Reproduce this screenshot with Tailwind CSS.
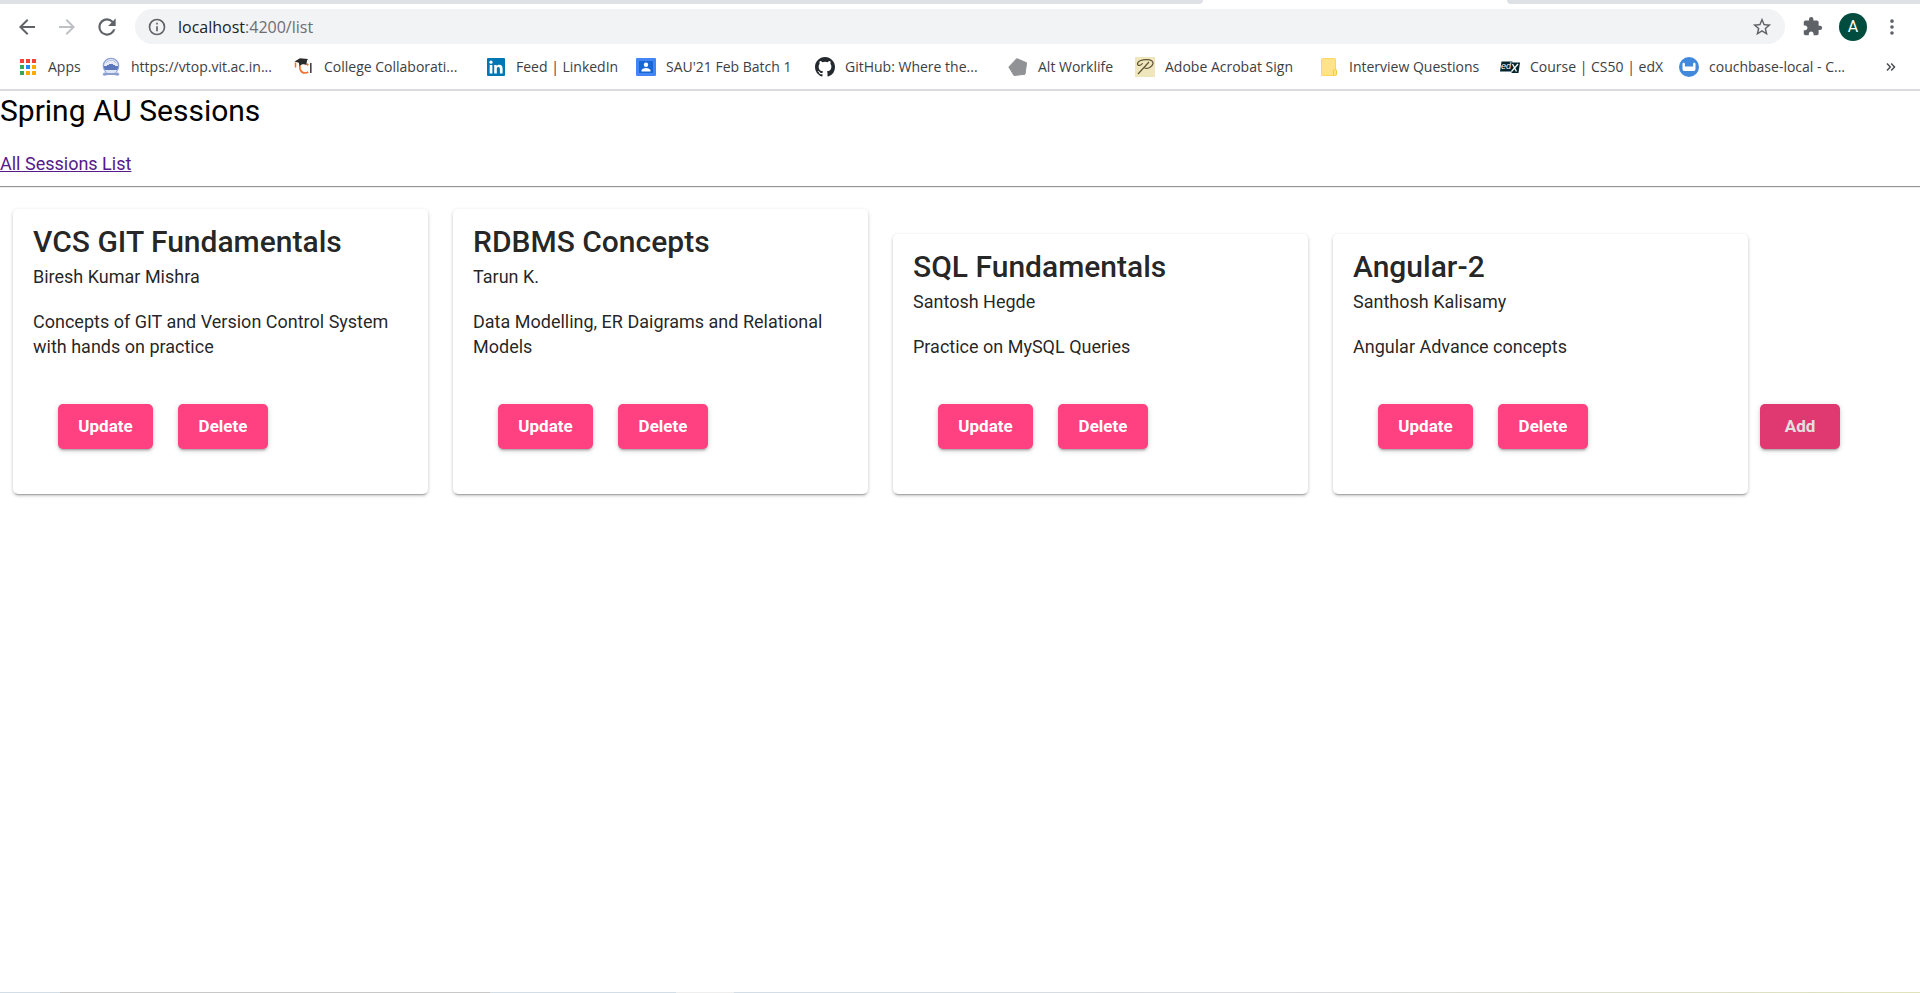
<!DOCTYPE html>
<html lang="en">
<head>
<meta charset="utf-8">
<title>Spring AU Sessions</title>
<script src="https://cdn.jsdelivr.net/npm/@tailwindcss/browser@4"></script>
</head>
<body class="flex min-h-screen flex-col bg-white font-['Roboto',sans-serif] text-lg leading-[25px] text-black">
<header class="border-b-2 border-[#dadce0] font-['Open_Sans',sans-serif]">
  <div class="flex h-1 bg-white" aria-hidden="true">
    <div class="w-[1203px] rounded-br bg-[#dee1e6]"></div>
    <div class="w-[304px]"></div>
    <div class="flex-1 rounded-bl bg-[#dee1e6]"></div>
  </div>
  <div class="mt-[5px] flex h-[35px] items-center pr-4 pl-[15px]">
    <button aria-label="Back" class="mr-4 flex size-6 items-center justify-center"><svg class="size-6" viewBox="0 0 24 24" fill="#5f6368"><path d="M20 11H7.8l5.6-5.6L12 4l-8 8 8 8 1.4-1.4L7.8 13H20z"/></svg></button>
    <button aria-label="Forward" class="mr-4 flex size-6 items-center justify-center"><svg class="size-6" viewBox="0 0 24 24" fill="#bdc1c6"><path d="M4 11h12.2l-5.6-5.6L12 4l8 8-8 8-1.4-1.4 5.6-5.6H4z"/></svg></button>
    <button aria-label="Reload" class="mr-4 flex size-6 items-center justify-center"><svg class="size-[26px] shrink-0" viewBox="0 0 24 24" fill="#5f6368"><path d="M17.65 6.35A7.96 7.96 0 0 0 12 4a8 8 0 1 0 7.73 10h-2.08A6 6 0 1 1 12 6c1.66 0 3.14.69 4.22 1.78L13 11h7V4z"/></svg></button>
    <div class="flex h-[35px] flex-1 items-center rounded-full bg-[#f1f3f4] px-3">
      <svg class="size-5 shrink-0" viewBox="0 0 24 24" fill="#5f6368"><path d="M11 17h2v-6h-2zm1-15a10 10 0 1 0 0 20 10 10 0 0 0 0-20m0 18a8 8 0 1 1 0-16 8 8 0 0 1 0 16M11 9h2V7h-2z"/></svg>
      <a href="#" class="ml-[11px] flex-1 text-base text-[#202124]">localhost<span class="text-[#6b6f73]">:4200/list</span></a>
      <button aria-label="Bookmark this page" class="flex size-[22px] items-center justify-center"><svg class="size-[22px]" viewBox="0 0 24 24" fill="#5f6368"><path d="m22 9.24-7.19-.62L12 2 9.19 8.63 2 9.24l5.46 4.73L5.82 21 12 17.27 18.18 21l-1.63-7.03zM12 15.4l-3.76 2.27 1-4.28-3.32-2.88 4.38-.38L12 6.1l1.71 4.04 4.38.38-3.32 2.88 1 4.28z"/></svg></button>
    </div>
    <button aria-label="Extensions" class="ml-4 flex size-[22px] items-center justify-center"><svg class="size-[21px]" viewBox="0 0 24 24" fill="#5f6368"><path d="M20.5 11H19V7c0-1.1-.9-2-2-2h-4V3.500a2.500 2.500 0 0 0-5 0V5H4c-1.100 0-1.990.9-1.990 2v3.800H3.500c1.490 0 2.700 1.210 2.700 2.700s-1.210 2.700-2.700 2.700H2V20c0 1.100.9 2 2 2h3.800v-1.500c0-1.490 1.210-2.700 2.700-2.700s2.700 1.210 2.700 2.700V22H17c1.100 0 2-.9 2-2v-4h1.500a2.500 2.500 0 0 0 0-5"/></svg></button>
    <button aria-label="Account" class="ml-4 flex size-7 items-center justify-center rounded-full bg-[#004d40] font-['Roboto',sans-serif] text-base text-white">A</button>
    <button aria-label="Menu" class="ml-[13px] flex size-6 items-center justify-center"><svg class="size-[22px]" viewBox="0 0 24 24" fill="#5f6368"><circle cx="12" cy="5.500" r="2"/><circle cx="12" cy="12" r="2"/><circle cx="12" cy="18.500" r="2"/></svg></button>
  </div>
  <nav aria-label="Bookmarks" class="flex h-[45px] items-center pr-6 pl-[18px] text-sm text-[#3c4043]">
    <div class="grid flex-1 grid-cols-[83px_193px_192px_150px_179px_193px_127px_184px_181px_179px_1fr] whitespace-nowrap">
      <a href="#" class="flex items-center gap-[10px]"><svg class="size-5" viewBox="0 0 20 20"><path fill="#f44336" d="M2 2h4v4H2zM8 2h4v4H8zM14 2h4v4h-4z"/><path fill="#34a853" d="M2 8h4v4H2zM2 14h4v4H2z"/><path fill="#1e88f5" d="M8 8h4v4H8z"/><path fill="#fbab05" d="M14 8h4v4h-4zM8 14h4v4H8zM14 14h4v4h-4z"/></svg>Apps</a>
      <a href="#" class="flex items-center gap-[10px]"><svg class="size-5" viewBox="0 0 20 20"><circle cx="10" cy="9" r="7.700" fill="#e6ebf7" stroke="#8fa3d3" stroke-width="1.300"/><path fill="none" stroke="#b4c1e3" d="M5 6a6 6 0 0 1 10 0"/><path fill="#5c78bb" d="M3 9h3V8h2V7h4v1h2v1h3v2l-1 2H4l-1-2z"/><path fill="#dfe6f5" d="M4 13h12l-2 3H6z"/><path fill="#8a9ed0" d="M1.500 17.500 3 15.500l4 .5h6l4-.5 1.500 2-1.500 1.300-4-.8H7l-4 .8z"/></svg>https://vtop.vit.ac.in...</a>
      <a href="#" class="flex items-center gap-[10px]"><svg class="size-5" viewBox="0 0 20 20"><path fill="none" stroke="#f4702a" stroke-width="1.700" d="M6 8c-1 4 1 8 5 8 1.500 0 2.500-.5 3.200-1.200M13 8.500l1.200-1.700"/><path stroke="#f4702a" stroke-width="1.500" d="M1.500 5.500v5"/><path fill="#2b2b2b" d="M.5 4.500 6 1.200 14 2l-1 1.500-.6 4.500C10 6.500 7.500 7 5.500 9L4.800 5.800z"/><path stroke="#444" stroke-width="1.600" d="M16.800 6v10"/></svg>College Collaborati...</a>
      <a href="#" class="flex items-center gap-[10px]"><svg class="size-5" viewBox="0 0 20 20"><rect x="1" y="1" width="18" height="18" rx="1" fill="#0077b5"/><g fill="#fff"><circle cx="5" cy="5.200" r="1.600"/><path d="M3.700 8h2.700v8.500H3.700zM8.200 8h2.500v1.200c.6-.9 1.500-1.400 2.700-1.400 2.600 0 3.200 1.700 3.200 4v4.700h-2.700v-4.200c0-1.200-.2-2.200-1.500-2.200s-1.600.9-1.600 2.200v4.200H8.200z"/></g></svg>Feed | LinkedIn</a>
      <a href="#" class="flex items-center gap-[10px]"><svg class="size-5" viewBox="0 0 20 20"><rect y="1" width="20" height="18" rx="1" fill="#4285f4"/><path fill="#1967d2" d="M3 4h14v12H3z"/><circle cx="10" cy="7.800" r="2.200" fill="#fff"/><path fill="#fff" d="M5.500 14.500v-1c0-1.600 2.500-2.500 4.500-2.500s4.500.9 4.500 2.500v1z"/></svg>SAU'21 Feb Batch 1</a>
      <a href="#" class="flex items-center gap-[10px]"><svg class="size-5" viewBox="0 0 16 16" fill="#24292e"><path d="M8 0C3.580 0 0 3.580 0 8c0 3.540 2.290 6.530 5.470 7.590.4.070.55-.17.55-.38 0-.19-.01-.82-.01-1.490-2.010.37-2.530-.49-2.690-.94-.09-.23-.48-.94-.82-1.130-.28-.15-.68-.52-.01-.53.63-.01 1.080.58 1.230.82.72 1.210 1.870.87 2.330.66.07-.52.28-.87.51-1.070-1.780-.2-3.640-.89-3.640-3.950 0-.87.31-1.590.82-2.150-.08-.2-.36-1.020.08-2.120 0 0 .67-.21 2.200.82a7.600 7.600 0 0 1 4 0c1.530-1.040 2.200-.82 2.200-.82.44 1.100.16 1.920.08 2.120.51.56.82 1.270.82 2.150 0 3.070-1.870 3.750-3.650 3.950.29.25.54.73.54 1.480 0 1.070-.01 1.930-.01 2.200 0 .21.15.46.55.38A8.010 8.010 0 0 0 16 8c0-4.420-3.580-8-8-8"/></svg>GitHub: Where the...</a>
      <a href="#" class="flex items-center gap-[10px]"><svg class="size-5" viewBox="0 0 20 20"><path fill="#909295" stroke="#909295" stroke-linejoin="round" d="m8.800 1.600 9.800 4.200-1.600 11.400-11 1.400L.8 10z"/></svg>Alt Worklife</a>
      <a href="#" class="flex items-center gap-[10px]"><svg class="size-5" viewBox="0 0 20 20"><path fill="#f0e6bd" d="M0 0h20v20H0z"/><path fill="none" stroke="#5c5434" stroke-width="1.200" d="M3 17 14 5M7.500 6c-.5 2.500-5 3.500-5 1C2.500 3.500 8 2.500 12 2.700c4 .2 6.500 1.300 6 4-.5 3-5.500 5.500-8.500 4.300"/></svg>Adobe Acrobat Sign</a>
      <a href="#" class="flex items-center gap-[10px]"><svg class="size-5" viewBox="0 0 20 20"><rect x="2.500" y="1.500" width="14" height="17" rx="1" fill="#ffe38a" stroke="#fdd65b"/><rect x="14.500" y="12.500" width="3" height="6" rx="1" fill="#ffe38a" stroke="#f6c945"/></svg>Interview Questions</a>
      <a href="#" class="flex items-center gap-[10px]"><svg class="size-5" viewBox="0 0 20 20"><path fill="#02262b" d="M1.500 4.500h11l-.3 1H20l-1.500 10.500h-7l.3-1.500H0z"/><text x="1" y="12" fill="#fff" font-family="Liberation Sans" font-size="9" font-style="italic">ed</text><path stroke="#fff" stroke-width="1.300" d="m12.500 7 4 7.500M18 7l-6.500 7.500"/></svg>Course | CS50 | edX</a>
      <a href="#" class="flex items-center gap-[10px]"><svg class="size-5" viewBox="0 0 20 20"><circle cx="10" cy="10" r="10" fill="#4089dc"/><path fill="#fff" d="M3.500 7c0-.8.500-1.200 1.200-1.200s1.100.5 1.200 1.200v2.500h8.200V7c.1-.7.500-1.200 1.200-1.200s1.200.4 1.200 1.200v5c0 1-.6 1.800-1.600 2H5.100c-1-.2-1.600-1-1.600-2z"/></svg>couchbase-local - C...</a>
    </div>
    <button aria-label="More bookmarks"><svg class="size-[10px]" viewBox="0 0 10 10" fill="none" stroke="#4a4d51" stroke-width="1.500"><path d="m1 1.500 3.300 3.500L1 8.500M5.200 1.500 8.500 5 5.200 8.500"/></svg></button>
  </nav>
</header>
<main class="flex-1">
  <h1 class="text-3xl leading-10">Spring AU Sessions</h1>
  <p class="mt-5"><a href="#" class="text-[#551a8b] underline">All Sessions List</a></p>
  <hr class="mt-[10px] mb-[21px] h-[2px] border-t border-b border-t-[#949494] border-b-[#eeeeee]">
  <div class="flex items-end gap-3 pl-[13px] text-black/87">
    <div class="flex items-end gap-[25px]">
      <article class="w-[415px] rounded-[5px] p-5 shadow-[0_3px_1px_-2px_rgba(0,0,0,0.2),0_2px_3px_0_rgba(0,0,0,0.14),0_1px_4px_0_rgba(0,0,0,0.12)]">
        <h2 class="mb-[10px] text-3xl leading-[25px] font-medium">VCS GIT Fundamentals</h2>
        <p class="mb-5">Biresh Kumar Mishra</p>
        <p>Concepts of GIT and Version Control System with hands on practice</p>
        <div class="mx-[25px] mt-[45px] mb-[25px] flex gap-[25px]">
          <button class="h-[45px] w-[95px] rounded-[5px] bg-[#ff4081] text-[17px] font-bold text-white shadow-[0_3px_2px_-2px_rgba(0,0,0,0.2),0_2px_3px_0_rgba(0,0,0,0.14),0_1px_6px_0_rgba(0,0,0,0.12)]">Update</button>
          <button class="h-[45px] w-[90px] rounded-[5px] bg-[#ff4081] text-[17px] font-bold text-white shadow-[0_3px_2px_-2px_rgba(0,0,0,0.2),0_2px_3px_0_rgba(0,0,0,0.14),0_1px_6px_0_rgba(0,0,0,0.12)]">Delete</button>
        </div>
      </article>
      <article class="w-[415px] rounded-[5px] p-5 shadow-[0_3px_1px_-2px_rgba(0,0,0,0.2),0_2px_3px_0_rgba(0,0,0,0.14),0_1px_4px_0_rgba(0,0,0,0.12)]">
        <h2 class="mb-[10px] text-3xl leading-[25px] font-medium">RDBMS Concepts</h2>
        <p class="mb-5">Tarun K.</p>
        <p>Data Modelling, ER Daigrams and Relational Models</p>
        <div class="mx-[25px] mt-[45px] mb-[25px] flex gap-[25px]">
          <button class="h-[45px] w-[95px] rounded-[5px] bg-[#ff4081] text-[17px] font-bold text-white shadow-[0_3px_2px_-2px_rgba(0,0,0,0.2),0_2px_3px_0_rgba(0,0,0,0.14),0_1px_6px_0_rgba(0,0,0,0.12)]">Update</button>
          <button class="h-[45px] w-[90px] rounded-[5px] bg-[#ff4081] text-[17px] font-bold text-white shadow-[0_3px_2px_-2px_rgba(0,0,0,0.2),0_2px_3px_0_rgba(0,0,0,0.14),0_1px_6px_0_rgba(0,0,0,0.12)]">Delete</button>
        </div>
      </article>
      <article class="w-[415px] rounded-[5px] p-5 shadow-[0_3px_1px_-2px_rgba(0,0,0,0.2),0_2px_3px_0_rgba(0,0,0,0.14),0_1px_4px_0_rgba(0,0,0,0.12)]">
        <h2 class="mb-[10px] text-3xl leading-[25px] font-medium">SQL Fundamentals</h2>
        <p class="mb-5">Santosh Hegde</p>
        <p>Practice on MySQL Queries</p>
        <div class="mx-[25px] mt-[45px] mb-[25px] flex gap-[25px]">
          <button class="h-[45px] w-[95px] rounded-[5px] bg-[#ff4081] text-[17px] font-bold text-white shadow-[0_3px_2px_-2px_rgba(0,0,0,0.2),0_2px_3px_0_rgba(0,0,0,0.14),0_1px_6px_0_rgba(0,0,0,0.12)]">Update</button>
          <button class="h-[45px] w-[90px] rounded-[5px] bg-[#ff4081] text-[17px] font-bold text-white shadow-[0_3px_2px_-2px_rgba(0,0,0,0.2),0_2px_3px_0_rgba(0,0,0,0.14),0_1px_6px_0_rgba(0,0,0,0.12)]">Delete</button>
        </div>
      </article>
      <article class="w-[415px] rounded-[5px] p-5 shadow-[0_3px_1px_-2px_rgba(0,0,0,0.2),0_2px_3px_0_rgba(0,0,0,0.14),0_1px_4px_0_rgba(0,0,0,0.12)]">
        <h2 class="mb-[10px] text-3xl leading-[25px] font-medium">Angular-2</h2>
        <p class="mb-5">Santhosh Kalisamy</p>
        <p>Angular Advance concepts</p>
        <div class="mx-[25px] mt-[45px] mb-[25px] flex gap-[25px]">
          <button class="h-[45px] w-[95px] rounded-[5px] bg-[#ff4081] text-[17px] font-bold text-white shadow-[0_3px_2px_-2px_rgba(0,0,0,0.2),0_2px_3px_0_rgba(0,0,0,0.14),0_1px_6px_0_rgba(0,0,0,0.12)]">Update</button>
          <button class="h-[45px] w-[90px] rounded-[5px] bg-[#ff4081] text-[17px] font-bold text-white shadow-[0_3px_2px_-2px_rgba(0,0,0,0.2),0_2px_3px_0_rgba(0,0,0,0.14),0_1px_6px_0_rgba(0,0,0,0.12)]">Delete</button>
        </div>
      </article>
    </div>
    <button class="mb-[45px] h-[45px] w-20 rounded-[5px] bg-[#e03871] text-[17px] font-bold text-[#e0e0e0] shadow-[0_3px_2px_-2px_rgba(0,0,0,0.2),0_2px_3px_0_rgba(0,0,0,0.14),0_1px_6px_0_rgba(0,0,0,0.12)]">Add</button>
  </div>
</main>
<footer class="flex h-px" aria-hidden="true">
  <div class="w-[60px] bg-[#d3dde6]"></div>
  <div class="w-[430px] bg-[#c8c8c8]"></div>
  <div class="w-[186px] bg-[#d3dde6]"></div>
  <div class="w-[58px] bg-[#eeeeee]"></div>
  <div class="flex-1 bg-linear-to-r from-[#d3dde6] via-[#d9dadd] to-[#dfe2ba]"></div>
</footer>
</body>
</html>
